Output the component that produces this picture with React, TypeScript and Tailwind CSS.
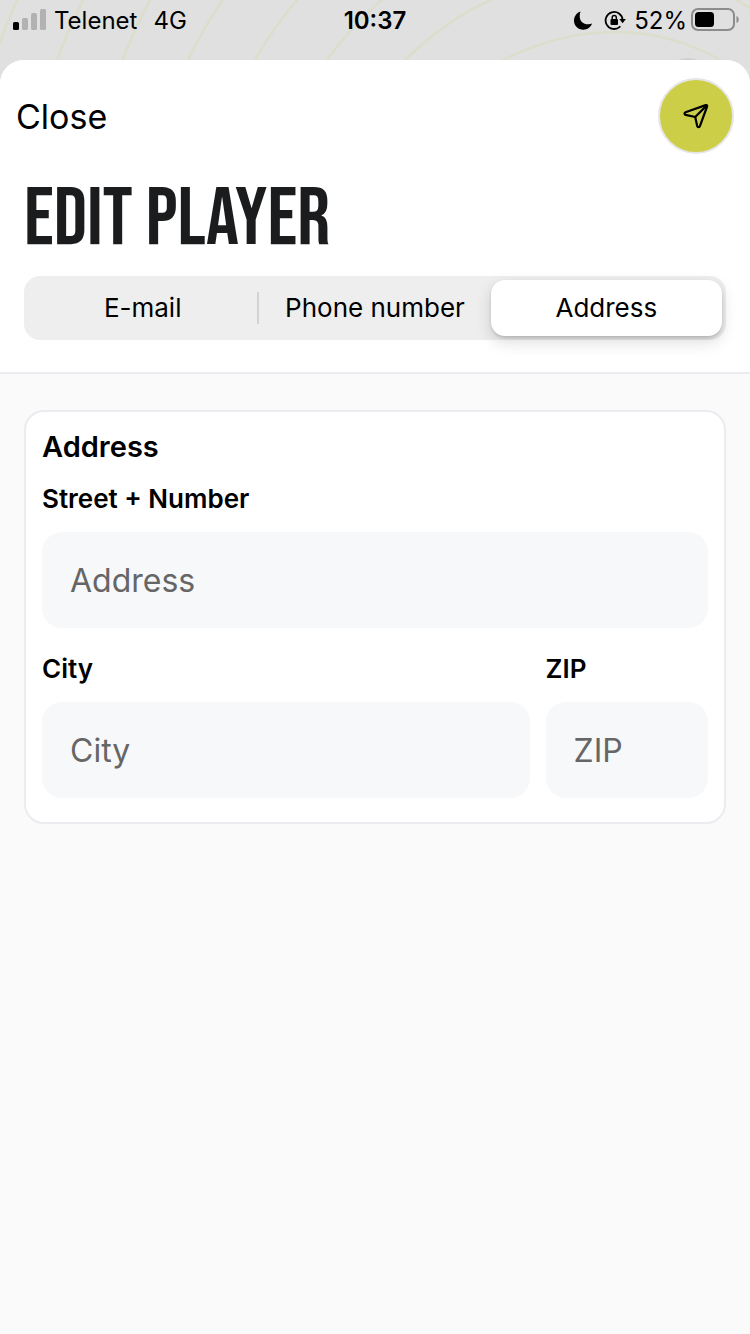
import { useState } from "react";

const tabs = ["E-mail", "Phone number", "Address"];

function BackgroundArcs() {
  return (
    <svg
      className="absolute top-0 left-0 h-[84px] w-full"
      viewBox="0 0 750 84"
      preserveAspectRatio="xMidYMin slice"
      fill="none"
      aria-hidden="true"
    >
      <g stroke="#dcddcb" strokeWidth="2.5">
        <path d="M18 -2Q8 20 -2 47" />
        <path d="M84 -2Q69 28 57 60" />
        <path d="M151 -2Q136 25 122 61" />
        <path d="M224 -2Q204 27 188 60" />
        <path d="M299 -2Q274 26 255 60" />
        <path d="M384 -2Q352 25 327 60" />
        <path d="M493 -1Q448 18 404 61" />
        <path d="M501 61Q558 32 615 32T722 61" />
        <path d="M733 -2L752 9" />
      </g>
      <circle cx="688" cy="86" r="28" fill="#d0d0d6" />
    </svg>
  );
}

function StatusBar() {
  return (
    <div className="relative grid h-[60px] grid-cols-[1fr_auto_1fr] items-start pt-[5px] text-2xl leading-8 text-black">
      <div className="flex items-center pl-[13px]">
        <svg className="mr-[7px] h-[26px] w-[34px]" viewBox="0 0 34 26" aria-label="Signal">
          <rect x="0" y="14" width="6" height="8" rx="1.5" fill="#000" />
          <g fill="#b2b2b2">
            <rect x="9" y="10" width="6" height="12" rx="1.5" />
            <rect x="18" y="5" width="6" height="17" rx="1.5" />
            <rect x="27" y="1" width="6" height="21" rx="1.5" />
          </g>
        </svg>
        <span className="mr-4">Telenet</span>
        <span>4G</span>
      </div>
      <div className="font-semibold">10:37</div>
      <div className="flex items-center justify-end pr-[11px]">
        <svg className="mr-[11px] h-5 w-5" viewBox="0 0 20 20" aria-label="Do not disturb">
          <path
            d="M7.6 .6C3.7 1.900 1 5.400 1 9.600c0 5.200 4.100 9.200 9.300 9.200 4.100 0 7.500-2.500 8.800-6.200-1.200.5-2.500.7-3.900.7-5.200 0-8.500-3.300-8.500-8.400 0-1.500.3-3 .9-4.300z"
            fill="#000"
          />
        </svg>
        <svg className="mr-2 h-[22px] w-[22px]" viewBox="0 0 22 22" fill="none" aria-label="Rotation locked">
          <path d="M15.800 16.800A8.500 8.500 0 1 1 18.600 10" stroke="#000" strokeWidth="1.800" strokeLinecap="round" />
          <path d="M15.300 8.900h6.600L18.600 13.200z" fill="#000" />
          <rect x="6.500" y="9" width="7.500" height="6" rx="1" fill="#000" />
          <path d="M8.200 9.500V7.500a2.050 2.050 0 0 1 4.100 0V9.500" stroke="#000" strokeWidth="1.400" />
        </svg>
        <span className="mr-1">52%</span>
        <svg className="h-[26px] w-12" viewBox="0 0 48 26" fill="none" aria-label="Battery">
          <rect x="1" y="1" width="42" height="21" rx="6" stroke="#8c8c8c" strokeWidth="2" />
          <rect x="4" y="4" width="19" height="15" rx="3.500" fill="#000" />
          <path d="M45.500 8c1.400.5 2.200 1.800 2.200 3.500s-.8 3-2.200 3.500z" fill="#8c8c8c" />
        </svg>
      </div>
    </div>
  );
}

function Field({ id, label }: { id: string; label: string }) {
  return (
    <div className="flex min-w-0 flex-col">
      <label htmlFor={id} className="mb-[15px] text-[26px] leading-9 font-semibold">
        {label}
      </label>
      <input
        id={id}
        type="text"
        placeholder={id}
        className="h-24 w-full rounded-[20px] bg-[#f7f8fa] px-7 text-[32px] placeholder:text-[#666666] placeholder:opacity-100"
      />
    </div>
  );
}

export default function App() {
  const [active, setActive] = useState("Address");

  return (
    <div className="relative flex min-h-screen flex-col bg-[#e0e0e0] font-['Inter','Liberation_Sans',sans-serif] text-black">
      <BackgroundArcs />
      <StatusBar />
      <main className="relative flex grow flex-col overflow-hidden rounded-t-[24px] bg-[#fafafa]">
        <header className="border-b-2 border-[#ebebf0] bg-white px-6 pt-[18px] pb-8">
          <div className="-mx-2 flex items-center justify-between">
            <button type="button" className="pt-0.5 text-[34px] leading-10">
              Close
            </button>
            <button
              type="button"
              aria-label="Send"
              className="flex size-[76px] items-center justify-center rounded-full border-2 border-[#e6e6e6] bg-[#cdce47]"
            >
              <svg className="size-7" viewBox="0 0 28 28" fill="none" stroke="#000" strokeWidth="2.200" strokeLinejoin="round" strokeLinecap="round" aria-hidden="true">
                <path d="M23.700 3.100L3.500 10.200c-1.400.6-1.300 2.300.2 2.700L13.200 15l2 9c.4 1.400 2.200 1.500 2.700.1L25.100 4.500c.3-.9-.5-1.700-1.400-1.400z" />
                <path d="M13.200 15L24.600 3.600" />
              </svg>
            </button>
          </div>
          <h1 className="mt-[23px] mb-[13px] text-[82px] leading-[86px] font-normal text-[#1b1c1e] font-['Bebas_Neue','Roboto_Condensed','Liberation_Sans_Narrow',sans-serif]">
            EDIT PLAYER
          </h1>
          <div role="tablist" className="grid h-16 grid-cols-3 rounded-2xl bg-[#eeeeee] p-1 text-[26px] leading-[38px]">
            {tabs.map((tab, i) => (
              <button
                key={tab}
                type="button"
                role="tab"
                aria-selected={active === tab}
                onClick={() => setActive(tab)}
                className={
                  active === tab
                    ? "flex items-center rounded-[14px] bg-white shadow-[0_6px_16px_rgba(0,0,0,0.14),0_2px_3px_rgba(0,0,0,0.14)]"
                    : "flex items-center"
                }
              >
                <span className="grow whitespace-nowrap">{tab}</span>
                {active !== tab && i < 2 && tabs[i + 1] !== active && (
                  <span className="h-8 w-[2px] bg-[#d3d3d3]" />
                )}
              </button>
            ))}
          </div>
        </header>
        <form className="mx-6 mt-9 rounded-[20px] border-2 border-[#ebebf0] bg-white px-4 pt-[15px] pb-6">
          <h2 className="mb-3.5 text-[29px] leading-10 font-semibold">Address</h2>
          <Field id="Address" label="Street + Number" />
          <div className="mt-[23px] grid grid-cols-[3fr_1fr] gap-4">
            <Field id="City" label="City" />
            <Field id="ZIP" label="ZIP" />
          </div>
        </form>
      </main>
    </div>
  );
}
